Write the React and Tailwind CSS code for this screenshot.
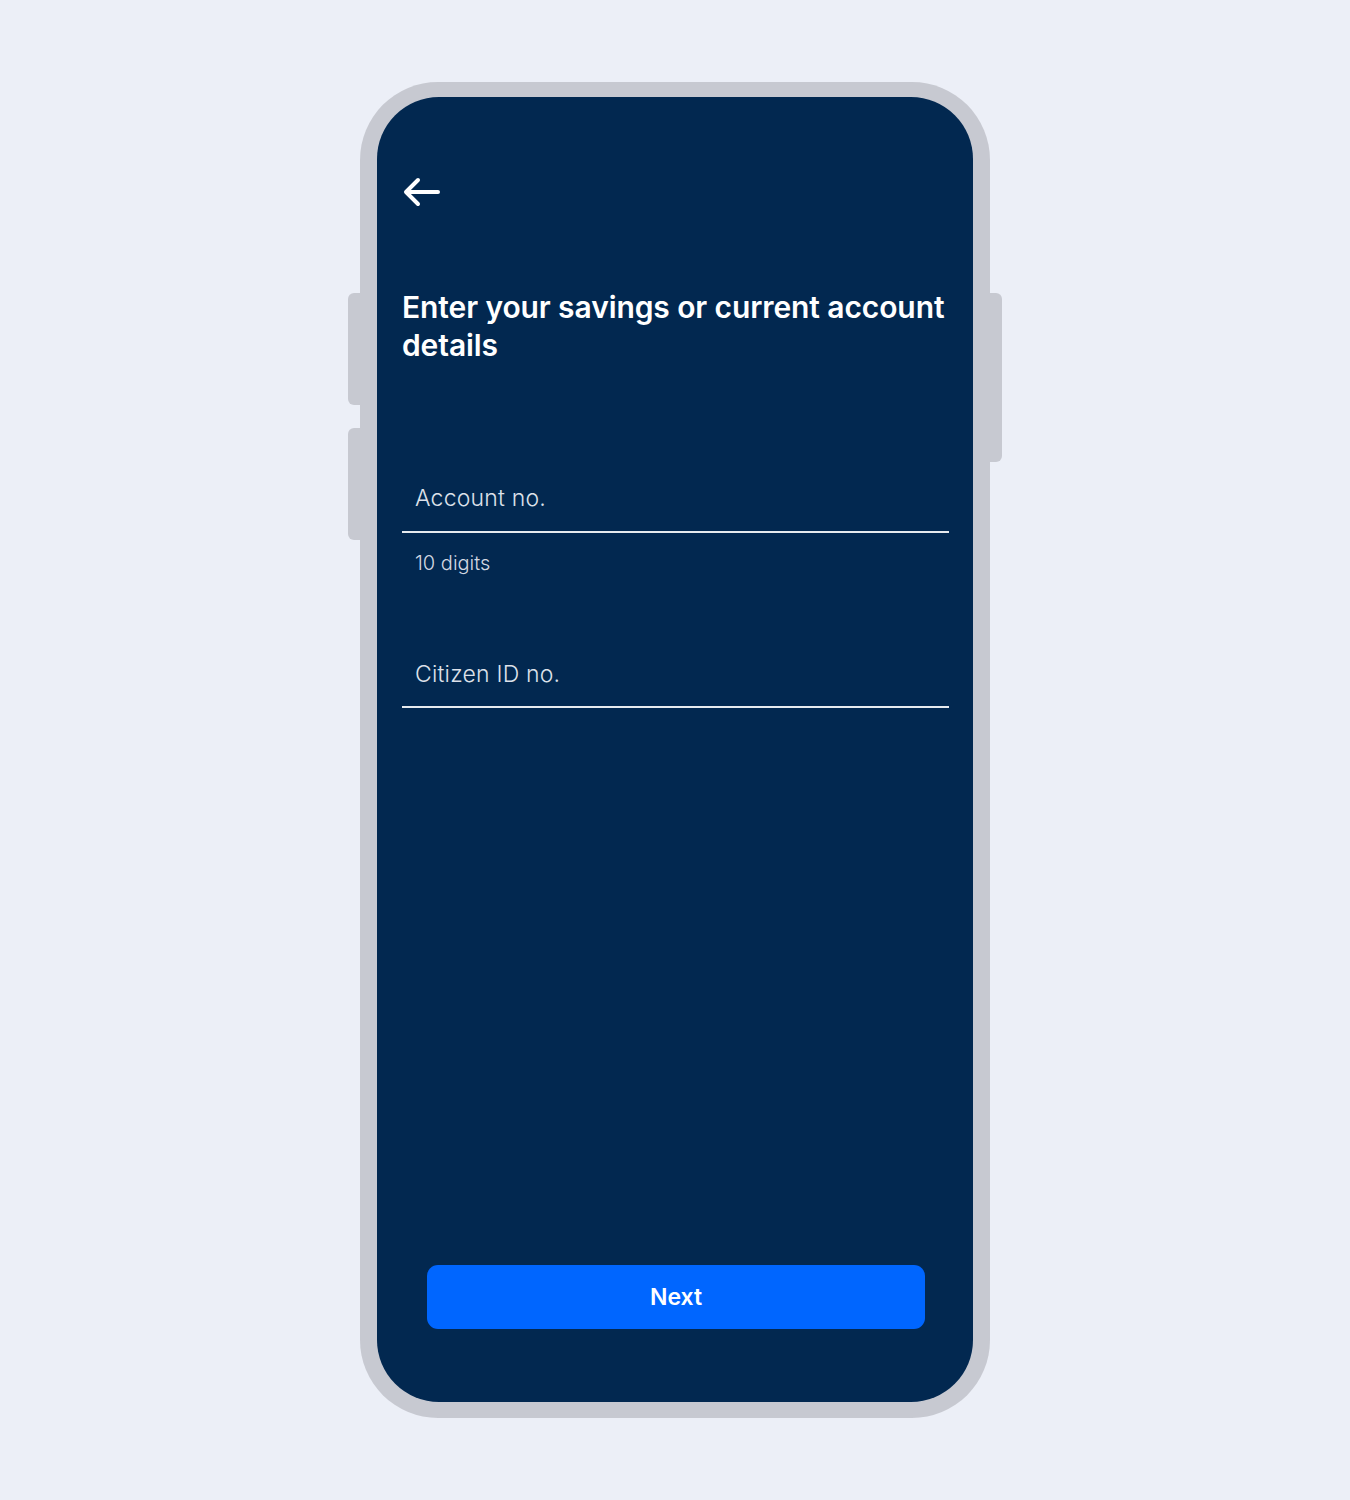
import React from 'react'

function BackArrow() {
  return (
    <svg width="40" height="34" viewBox="0 0 40 34" fill="none" stroke="white" strokeWidth="4" strokeLinecap="round" strokeLinejoin="round">
      <path d="M36 17H5" />
      <path d="M16 5L4 17l12 12" />
    </svg>
  )
}

function Field({ label, hint }) {
  return (
    <div>
      <div className="border-b-2 border-white/90 px-[13px] pb-[15px]">
        <span className="text-[23px] font-light text-[#dde1ea] tracking-[0.2px]">{label}</span>
      </div>
      {hint && <p className="px-[13px] pt-[15px] text-[20px] font-light text-[#d3d8e2]">{hint}</p>}
    </div>
  )
}

export default function App() {
  return (
    <div className="min-h-[1500px] bg-[#eceff7] pt-[82px] font-['Inter',sans-serif]">
      <div className="relative mx-auto w-[630px] h-[1336px]">
        {/* side buttons */}
        <div className="absolute left-[-12px] top-[211px] w-[16px] h-[112px] rounded-l-[6px] bg-[#c7c9d1]" />
        <div className="absolute left-[-12px] top-[346px] w-[16px] h-[112px] rounded-l-[6px] bg-[#c7c9d1]" />
        <div className="absolute right-[-12px] top-[211px] w-[16px] h-[169px] rounded-r-[6px] bg-[#c7c9d1]" />

        <div className="relative h-full rounded-[78px] bg-[#c7c9d1] px-[17px] pt-[15px] pb-[16px]">
          <div className="flex h-full flex-col rounded-[62px] bg-[#022850] pl-[25px] pr-[24px]">
            <div className="pt-[78px]">
              <BackArrow />
            </div>

            <h1 className="mt-[79px] text-[30px] leading-[38px] font-semibold text-white tracking-[-0.1px]">
              Enter your savings or current account details
            </h1>

            <div className="mt-[117px]">
              <Field label="Account no." hint="10 digits" />
            </div>
            <div className="mt-[79px]">
              <Field label="Citizen ID no." />
            </div>

            <div className="flex-1" />

            <div className="pl-[25px] pr-[24px] pb-[73px]">
              <button className="h-[64px] w-full rounded-[11px] bg-[#0066ff] text-[23px] font-semibold text-white">
                Next
              </button>
            </div>
          </div>
        </div>
      </div>
    </div>
  )
}
